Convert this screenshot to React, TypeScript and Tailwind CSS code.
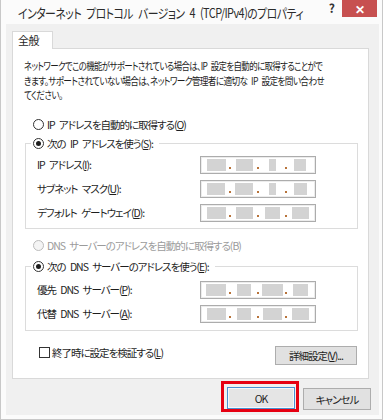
import { Fragment } from "react";

// word gap: Meiryo UI's space is wider than Noto's
const S = "\u2002";

// ========================
// Small controls
// ========================
function Radio({ checked = false, disabled = false }: { checked?: boolean; disabled?: boolean }) {
  return (
    <span
      className={`w-[11px] h-[11px] rounded-full border flex items-center justify-center shrink-0 ${
        disabled ? "border-[#bcbcbc] bg-[#f4f4f4]" : "border-[#333] bg-white"
      }`}
    >
      {checked && <span className="w-[5px] h-[5px] rounded-full bg-[#1e1e1e]" />}
    </span>
  );
}

function IpField({ blocks }: { blocks: number[] }) {
  return (
    <div className="w-[116px] h-[18px] border border-[#acacac] bg-white shadow-[inset_0_0_0_1px_#ececec] flex items-center pl-[3px]">
      {blocks.map((w, i) => (
        <Fragment key={i}>
          <div className="w-[24px] flex justify-center">
            <div className="h-[12px] bg-[#d3d3d3]" style={{ width: w }} />
          </div>
          {i < 3 && (
            <div className="w-[4px] h-[12px] flex justify-center items-end pb-[2px]">
              <div className="w-[2px] h-[2px] bg-[#b8733a]" />
            </div>
          )}
        </Fragment>
      ))}
    </div>
  );
}

function Row({ label, blocks }: { label: React.ReactNode; blocks: number[] }) {
  return (
    <>
      <div className="h-[18px] flex items-center whitespace-nowrap">{label}</div>
      <IpField blocks={blocks} />
    </>
  );
}

export default function App() {
  return (
    <div className="w-[383px] h-[420px] bg-[#fbfbfb] border-x border-b border-[#c8c8c8] flex flex-col text-[10.5px] leading-[15px] tracking-[-1px] text-[#1e1e1e] font-['Noto_Sans_CJK_JP','Noto_Sans',sans-serif] [font-feature-settings:'palt']">
      {/* Title bar */}
      <div className="h-[24px] flex items-start shrink-0">
        <div className="w-[300px] shrink-0 pl-[17px] pt-[4px] text-[13px] leading-[18px] tracking-[-0.6px] text-[#2b2b2b] whitespace-nowrap">
          <span className="inline-block origin-left scale-x-[0.835]">
            インターネット{S}プロトコル{S}バージョン{S}4{S}(TCP/IPv4)のプロパティ
          </span>
        </div>
        <div className="ml-auto mr-[8px] pt-[1px] text-[12px] leading-[14px] font-bold text-[#333]">?</div>
        <div className="w-[35px] h-[17px] mr-[5px] bg-[#c75050] flex items-center justify-center text-white text-[12px] leading-none font-bold tracking-normal">
          ✕
        </div>
      </div>

      {/* Body */}
      <div className="ml-[5px] mr-[3px] bg-[#f0f0f0] pt-[7px] pl-[6px] pr-[10px] pb-[3px]">
        {/* Tab */}
        <div className="w-[41px] h-[18px] -mb-px relative bg-white border border-b-0 border-[#d9d9d9] pl-[5px] pt-[1px] leading-[15px] text-[11px] tracking-[-0.5px]">
          全般
        </div>

        {/* Tab panel */}
        <div className="h-[331px] bg-white border border-[#d9d9d9] flex flex-col">
          <div className="pl-[11px] pt-[10px] leading-[14.5px] tracking-[-0.8px] whitespace-nowrap">
            <div className="w-[330px] origin-left scale-x-[0.805]">
              ネットワークでこの機能がサポートされている場合は、IP{S}設定を自動的に取得することがで
            </div>
            <div className="w-[330px] origin-left scale-x-[0.825]">
              きます。サポートされていない場合は、ネットワーク管理者に適切な{S}IP{S}設定を問い合わせ
            </div>
            <div className="w-[330px] origin-left scale-x-[0.82]">てください。</div>
          </div>

          <div className="mt-[14px] pl-[20px] flex items-center gap-[3px] h-[15px]">
            <Radio />
            <span>
              IP{S}アドレスを自動的に取得する(<u>O</u>)
            </span>
          </div>

          <fieldset className="mt-[4px] ml-[12px] mr-[10px] border border-[#dcdcdc]">
            <legend className="ml-[5px] pl-[2px] pr-[6px] bg-white">
              <span className="flex items-center gap-[3px] h-[15px]">
                <Radio checked />
                <span>
                  次の{S}IP{S}アドレスを使う(<u>S</u>):
                </span>
              </span>
            </legend>
            <div className="pl-[11px] pt-[5px] pb-[6px] grid grid-cols-[163px_116px] gap-y-[6px]">
              <Row label={<span>IP{S}アドレス(<u>I</u>):</span>} blocks={[19, 17, 7, 12]} />
              <Row label={<span>サブネット{S}マスク(<u>U</u>):</span>} blocks={[18, 18, 7, 13]} />
              <Row label={<span>デフォルト{S}ゲートウェイ(<u>D</u>):</span>} blocks={[19, 17, 15, 17]} />
            </div>
          </fieldset>

          <div className="mt-[9px] pl-[20px] flex items-center gap-[3px] h-[15px] text-[#9b9b9b]">
            <Radio disabled />
            <span>DNS{S}サーバーのアドレスを自動的に取得する(B)</span>
          </div>

          <fieldset className="mt-[6px] ml-[12px] mr-[10px] border border-[#dcdcdc]">
            <legend className="ml-[5px] pl-[2px] pr-[6px] bg-white">
              <span className="flex items-center gap-[3px] h-[15px]">
                <Radio checked />
                <span>
                  次の{S}DNS{S}サーバーのアドレスを使う(<u>E</u>):
                </span>
              </span>
            </legend>
            <div className="pl-[11px] pt-[7px] pb-[7px] grid grid-cols-[163px_116px] gap-y-[6px]">
              <Row label={<span>優先{S}DNS{S}サーバー(<u>P</u>):</span>} blocks={[20, 14, 21, 15]} />
              <Row label={<span>代替{S}DNS{S}サーバー(<u>A</u>):</span>} blocks={[19, 14, 19, 17]} />
            </div>
          </fieldset>

          <div className="mt-[14px] ml-[26px] mr-[11px] flex items-start">
            <div className="flex items-center gap-[2px] h-[15px]">
              <span className="w-[11px] h-[11px] border border-[#333] bg-white" />
              <span>
                終了時に設定を検証する(<u>L</u>)
              </span>
            </div>
            <button className="ml-auto mt-[1.5px] w-[82px] h-[19px] bg-[#e1e1e1] border border-[#adadad] flex items-center justify-center">
              詳細設定(<u>V</u>)...
            </button>
          </div>
        </div>

        {/* Dialog buttons */}
        <div className="mt-[2px] -mr-[2px] flex justify-end items-start">
          <div className="border-[3px] border-[#e60012] pt-[3px] pl-[3px] pr-[1px]">
            <button className="w-[68px] h-[22px] bg-[#e5e5e5] border border-[#4a8fd0] shadow-[inset_0_0_0_1px_#f4f8fc] flex items-center justify-center">
              OK
            </button>
          </div>
          <button className="ml-[4px] mt-[7px] w-[68px] h-[22px] bg-[#e1e1e1] border border-[#adadad] flex items-center justify-center">
            キャンセル
          </button>
        </div>
      </div>
    </div>
  );
}
